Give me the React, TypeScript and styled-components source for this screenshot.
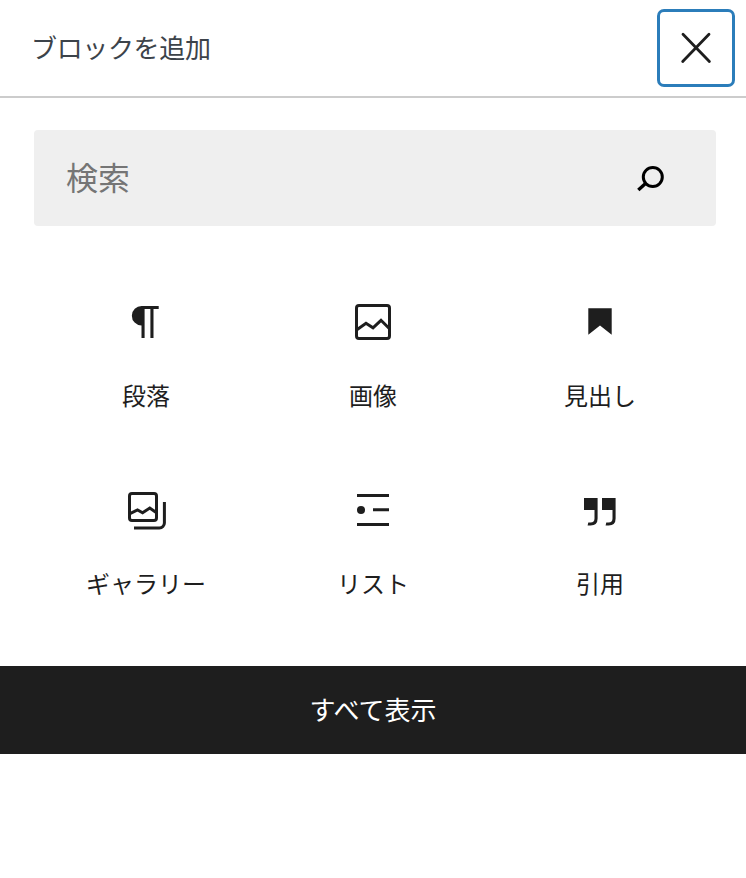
import React from "react";
import styled, { createGlobalStyle } from "styled-components";

const GlobalStyle = createGlobalStyle`
  *, *::before, *::after { box-sizing: border-box; }
  body {
    margin: 0;
    background: #fff;
    color: #1e1e1e;
    font-family: "Noto Sans CJK JP", sans-serif;
  }
`;

const Panel = styled.div`
  width: 100%;
  height: 878px;
  display: flex;
  flex-direction: column;
  overflow: hidden;
`;

const Header = styled.header`
  flex: none;
  height: 98px;
  display: flex;
  align-items: center;
  justify-content: space-between;
  padding: 0 11px 0 31px;
  border-bottom: 2px solid #ccc;
`;

const Title = styled.h1`
  margin: 0;
  padding-bottom: 2px;
  font-size: 26px;
  line-height: 40px;
  letter-spacing: -0.35px;
  font-weight: 400;
  color: #3c434a;
`;

const CloseButton = styled.button`
  width: 78px;
  height: 78px;
  padding: 0;
  display: grid;
  place-items: center;
  background: #fff;
  border: 3px solid #2b7dba;
  border-radius: 7px;
  color: #1e1e1e;
`;

const SearchBar = styled.div`
  flex: none;
  height: 96px;
  margin: 32px 30px 0 34px;
  padding: 0 41px 0 32px;
  display: flex;
  align-items: center;
  background: #efefef;
  border-radius: 4px;
  color: #000;
`;

const SearchInput = styled.input`
  flex: 1;
  min-width: 0;
  height: 52px;
  padding: 0 0 4px;
  border: 0;
  outline: 0;
  background: transparent;
  font: inherit;
  font-size: 32px;
  &::placeholder {
    color: #757575;
    opacity: 1;
  }
`;

const BlockGrid = styled.div`
  flex: none;
  display: grid;
  grid-template-columns: 228px 226px 228px;
  grid-auto-rows: 188px;
  margin: 32px 32px 0;
  height: 408px;
`;

const BlockButton = styled.button`
  display: flex;
  flex-direction: column;
  align-items: center;
  gap: 31px;
  padding: 40px 0 0;
  border: 0;
  background: none;
  color: inherit;
  font: inherit;
`;

const BlockLabel = styled.span`
  font-size: 24px;
  line-height: 36px;
  white-space: nowrap;
`;

const ShowAll = styled.button`
  flex: none;
  height: 88px;
  padding: 0 0 4px;
  border: 0;
  background: #1e1e1e;
  color: #fff;
  font: inherit;
  font-size: 26px;
`;

const Icon = styled.svg`
  display: block;
  width: 48px;
  height: 48px;
  fill: none;
  stroke: none;
`;

const blocks = [
  {
    label: "段落",
    icon: (
      <path
        fill="currentColor"
        d="M19.7 8H36.7V11H31.5V40H28.4V11H22.6V40H19.5V27.5A9.75 9.75 0 0 1 19.7 8Z"
      />
    ),
  },
  {
    label: "画像",
    icon: (
      <g stroke="currentColor" strokeWidth="3">
        <rect x="7.5" y="7.5" width="33" height="33" rx="2.5" />
        <path d="M7.5 32L17 25.3L24 29.8L32 22.3L40.5 30.7" />
      </g>
    ),
  },
  {
    label: "見出し",
    icon: <path fill="currentColor" d="M12.3 10.3H35.7V36.8L24 27.5L12.3 36.8Z" />,
  },
  {
    label: "ギャラリー",
    icon: (
      <g stroke="currentColor" strokeWidth="3">
        <rect x="7.5" y="7.5" width="27" height="27" rx="2.5" />
        <path d="M7.5 27.8L15.5 24L20.6 26.8L27.8 22L34.5 26.8" />
        <path d="M42.4 16V37A5 5 0 0 1 37.4 42H12" />
      </g>
    ),
  },
  {
    label: "リスト",
    icon: (
      <g fill="currentColor">
        <path d="M8 8H40V11H8ZM24 22.3H40V25.3H24ZM8 37H40V40H8Z" />
        <circle cx="12" cy="24" r="4" />
      </g>
    ),
  },
  {
    label: "引用",
    icon: (
      <g fill="currentColor">
        <path d="M8 12H21.6V32.5Q21.6 39.5 14.6 39.5H11.6L12.3 36.6H14.5Q18.5 36.6 18.5 32.5V24H8Z" />
        <path d="M26 12H39.6V32.5Q39.6 39.5 32.6 39.5H29.6L30.3 36.6H32.5Q36.5 36.6 36.5 32.5V24H26Z" />
      </g>
    ),
  },
];

export default function App() {
  return (
    <>
      <GlobalStyle />
      <Panel>
        <Header>
          <Title>ブロックを追加</Title>
          <CloseButton aria-label="閉じる">
            <Icon viewBox="0 0 48 48">
              <path
                d="M11 10.3L37.4 37.4M37 10.3L10.7 37.4"
                stroke="currentColor"
                strokeWidth="2.8"
                strokeLinecap="round"
              />
            </Icon>
          </CloseButton>
        </Header>
        <SearchBar>
          <SearchInput type="text" placeholder="検索" />
          <Icon viewBox="0 0 48 48">
            <g stroke="currentColor" strokeWidth="3">
              <circle cx="25.8" cy="23" r="9.5" />
              <path d="M18.8 29.2L11.3 35.9" strokeWidth="3.4" />
            </g>
          </Icon>
        </SearchBar>
        <BlockGrid>
          {blocks.map(({ label, icon }) => (
            <BlockButton key={label}>
              <Icon viewBox="0 0 48 48">{icon}</Icon>
              <BlockLabel>{label}</BlockLabel>
            </BlockButton>
          ))}
        </BlockGrid>
        <ShowAll>すべて表示</ShowAll>
      </Panel>
    </>
  );
}
